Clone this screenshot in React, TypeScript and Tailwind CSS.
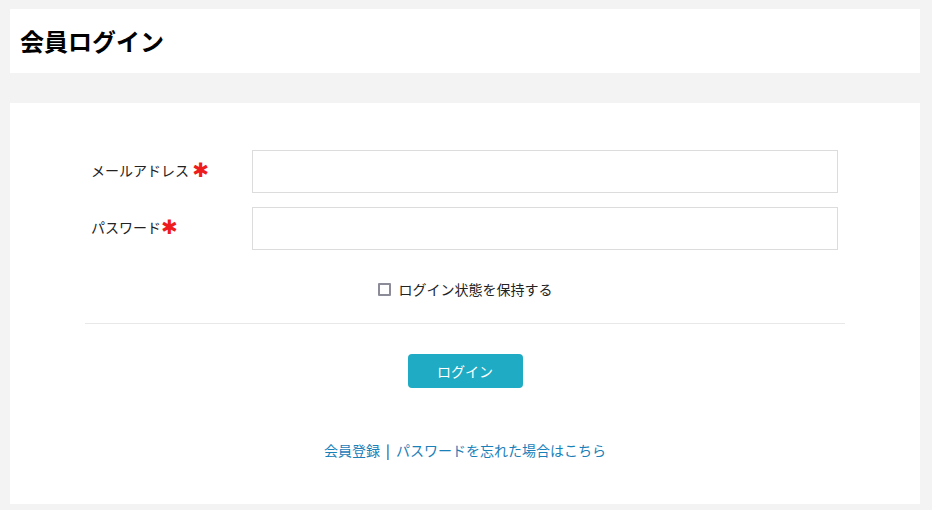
import { useState } from 'react'

const FONT = '[font-family:"Noto_Sans_CJK_JP","Noto_Sans",sans-serif]'

function Required() {
  return <span className='[font-family:"DejaVu_Sans",sans-serif] text-[20px] leading-none text-[#ee1c1c]'>✱</span>
}

export default function App() {
  const [keep, setKeep] = useState(false)

  return (
    <div className={`min-h-[510px] bg-[#f3f3f3] pt-[9px] pb-[6px] pl-[10px] pr-[12px] ${FONT}`}>
      {/* Title */}
      <div className="bg-white h-[64px] flex items-center px-[10px]">
        <h1 className="text-[24px] font-bold text-black leading-none">会員ログイン</h1>
      </div>

      {/* Form */}
      <div className="bg-white mt-[30px] h-[401px] px-[75px] pt-[47px]">
        <div className="px-[6px] flex flex-col gap-[14px]">
          <div className="flex items-center">
            <label className="w-[161px] flex items-center text-[14px] text-[#222] leading-none relative top-[-2px]">
              メールアドレス&nbsp;<Required />
            </label>
            <input type="email" className="w-[586px] h-[43px] border border-[#dcdcdc] bg-white outline-none px-2 text-[14px]" />
          </div>
          <div className="flex items-center">
            <label className="w-[161px] flex items-center text-[14px] text-[#222] leading-none relative top-[-2px]">
              パスワード<Required />
            </label>
            <input type="password" className="w-[586px] h-[43px] border border-[#dcdcdc] bg-white outline-none px-2 text-[14px]" />
          </div>
        </div>

        <div className="flex justify-center mt-[32px]">
          <label className="flex items-center gap-[8px] text-[14px] text-[#222] leading-none cursor-pointer">
            <span
              onClick={() => setKeep(!keep)}
              className="w-[13px] h-[13px] border-2 border-[#8c8c98] rounded-[1px] bg-white"
            />
            ログイン状態を保持する
          </label>
        </div>

        <div className="border-t border-[#e8e8e8] mt-[27px]" />

        <div className="flex justify-center mt-[30px]">
          <button className="w-[115px] h-[34px] rounded-[4px] bg-[#1eabc3] text-white text-[14px] leading-none">
            ログイン
          </button>
        </div>

        <div className="flex justify-center mt-[55px] text-[14px] leading-none">
          <a href="#" className="text-[#1a80b8]">会員登録</a>
          <span className="text-[#222] mx-[6px]">|</span>
          <a href="#" className="text-[#1a80b8]">パスワードを忘れた場合はこちら</a>
        </div>
      </div>
    </div>
  )
}
